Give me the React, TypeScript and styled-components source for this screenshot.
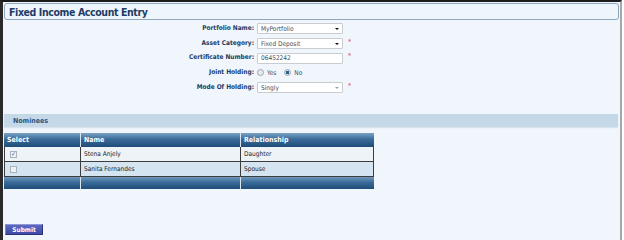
import * as React from "react";
import styled, { createGlobalStyle } from "styled-components";

const GlobalStyle = createGlobalStyle`
  html, body {
    margin: 0;
    padding: 0;
    background: #ffffff;
  }
  body {
    font-family: "DejaVu Sans", Verdana, sans-serif;
    font-stretch: condensed;
  }
`;

const Frame = styled.div`
  box-sizing: border-box;
  width: 622px;
  height: 240px;
  border-top: 2px solid #1c1c1c;
  border-left: 3px solid #2a2a2a;
  border-right: 2px solid #a3a8ad;
  background: #f0f6fb;
  padding: 1px 1px 0 1px;
  display: flex;
  flex-direction: column;
`;

const TitleBar = styled.div`
  box-sizing: border-box;
  height: 17px;
  border: 1.5px solid #8ea7bf;
  border-radius: 3px;
  background: #eef5fb;
  display: flex;
  align-items: center;
  padding-left: 4px;
  font-size: 10.5px;
  letter-spacing: -0.4px;
  font-weight: bold;
  color: #1d3c66;
`;

const Form = styled.div`
  display: grid;
  grid-template-columns: 250px auto;
  column-gap: 3px;
  row-gap: 3px;
  margin-top: 3px;
  align-items: center;
`;

const Label = styled.div`
  text-align: right;
  font-size: 6.5px;
  font-weight: bold;
  color: #1d3c66;
  height: 11.7px;
  line-height: 11.7px;
`;

const FieldCell = styled.div`
  display: flex;
  align-items: center;
  gap: 5px;
  height: 11.7px;
`;

const Box = styled.div`
  box-sizing: border-box;
  width: 86px;
  height: 11px;
  border: 1px solid #c9cdd1;
  border-radius: 1px;
  background: #ffffff;
  display: flex;
  align-items: center;
  justify-content: space-between;
  padding: 0 3px;
  font-size: 6.5px;
  color: #3a4f66;
`;

const Arrow = styled.span<{ $faint?: boolean }>`
  width: 0;
  height: 0;
  border-left: 2px solid transparent;
  border-right: 2px solid transparent;
  border-top: 2px solid ${(p) => (p.$faint ? "#9aa3ad" : "#111")};
`;

const Req = styled.span`
  color: #e0406a;
  font-size: 7px;
  line-height: 7px;
  margin-top: -3px;
`;

const RadioGroup = styled.div`
  display: flex;
  align-items: center;
  gap: 3px;
  font-size: 6.5px;
  color: #3a4f66;
`;

const Radio = styled.span<{ $on?: boolean }>`
  box-sizing: border-box;
  width: 7px;
  height: 7px;
  border-radius: 50%;
  border: 1px solid #9ba6b0;
  background: ${(p) =>
    p.$on
      ? "radial-gradient(circle, #2d5f8f 0 1.6px, #d6dde4 2px)"
      : "#e6eaee"};
  margin-left: ${(p) => (p.$on ? "5px" : "0")};
`;

const SectionBar = styled.div`
  box-sizing: border-box;
  height: 13px;
  margin-top: 21px;
  margin-right: 1px;
  background: #c4d8e8;
  box-shadow: 0 1px 1px #d8e3ec;
  display: flex;
  align-items: center;
  padding-left: 9px;
  font-size: 7px;
  font-weight: bold;
  color: #2b5580;
`;

const Table = styled.div`
  width: 370px;
  margin-top: 6px;
  display: grid;
  grid-template-columns: 76px 160px 134px;
`;

const HeadCell = styled.div<{ $first?: boolean }>`
  box-sizing: border-box;
  height: 14px;
  background: linear-gradient(#7aa2c6 0%, #3a6b98 45%, #1f4c79 100%);
  border-left: ${(p) => (p.$first ? "none" : "1px solid #d8e4ee")};
  color: #ffffff;
  font-size: 7px;
  font-weight: bold;
  display: flex;
  align-items: center;
  padding-left: 3px;
`;

const Cell = styled.div<{ $alt?: boolean; $last?: boolean }>`
  box-sizing: border-box;
  height: 15px;
  background: ${(p) => (p.$alt ? "#d5e4f1" : "#eef3f8")};
  border-bottom: 1px solid #3d3d3d;
  border-left: 1px solid #3d3d3d;
  border-right: ${(p) => (p.$last ? "1px solid #3d3d3d" : "none")};
  font-size: 6.5px;
  color: #222;
  display: flex;
  align-items: center;
  padding-left: 3px;
`;

const FootCell = styled.div<{ $first?: boolean }>`
  height: 12px;
  background: linear-gradient(#6f98bd 0%, #3a6b98 45%, #1f4c79 100%);
  border-left: ${(p) => (p.$first ? "none" : "1px solid #d8e4ee")};
`;

const Check = styled.span`
  box-sizing: border-box;
  width: 7px;
  height: 7px;
  border: 1px solid #a9b3bd;
  background: #eef1f4;
  margin-left: 2px;
  display: flex;
  align-items: center;
  justify-content: center;
  font-size: 6px;
  line-height: 6px;
  color: #2d4d7a;
`;

const Spacer = styled.div`
  flex: 1;
`;

const SubmitButton = styled.button`
  box-sizing: border-box;
  width: 38px;
  height: 11px;
  margin: 0 0 5px 1px;
  padding: 0;
  border: none;
  border-top: 1px solid #8e97d6;
  border-left: 1px solid #7c85c9;
  border-right: 1px solid #2b3380;
  border-bottom: 1px solid #2b3380;
  background: linear-gradient(#5d68c2, #3f4aa6);
  color: #ffffff;
  font-family: "DejaVu Sans", Verdana, sans-serif;
  font-stretch: condensed;
  font-size: 6.5px;
  font-weight: bold;
`;

const nominees = [
  { name: "Stena Anjely", relation: "Daughter", checked: true },
  { name: "Sanita Fernandes", relation: "Spouse", checked: false },
];

export default function App() {
  return (
    <>
      <GlobalStyle />
      <Frame>
        <TitleBar>Fixed Income Account Entry</TitleBar>
        <Form>
          <Label>Portfolio Name:</Label>
          <FieldCell>
            <Box>
              MyPortfolio
              <Arrow />
            </Box>
          </FieldCell>
          <Label>Asset Category:</Label>
          <FieldCell>
            <Box>
              Fixed Deposit
              <Arrow />
            </Box>
            <Req>*</Req>
          </FieldCell>
          <Label>Certificate Number:</Label>
          <FieldCell>
            <Box>06452242</Box>
            <Req>*</Req>
          </FieldCell>
          <Label>Joint Holding:</Label>
          <FieldCell>
            <RadioGroup>
              <Radio />
              Yes
              <Radio $on />
              No
            </RadioGroup>
          </FieldCell>
          <Label>Mode Of Holding:</Label>
          <FieldCell>
            <Box>
              Singly
              <Arrow $faint />
            </Box>
            <Req>*</Req>
          </FieldCell>
        </Form>
        <SectionBar>Nominees</SectionBar>
        <Table>
          <HeadCell $first>Select</HeadCell>
          <HeadCell>Name</HeadCell>
          <HeadCell>Relationship</HeadCell>
          {nominees.map((n, i) => (
            <React.Fragment key={n.name}>
              <Cell $alt={i % 2 === 1}>
                <Check>{n.checked ? "✓" : ""}</Check>
              </Cell>
              <Cell $alt={i % 2 === 1}>{n.name}</Cell>
              <Cell $alt={i % 2 === 1} $last>
                {n.relation}
              </Cell>
            </React.Fragment>
          ))}
          <FootCell $first />
          <FootCell />
          <FootCell />
        </Table>
        <Spacer />
        <SubmitButton>Submit</SubmitButton>
      </Frame>
    </>
  );
}
